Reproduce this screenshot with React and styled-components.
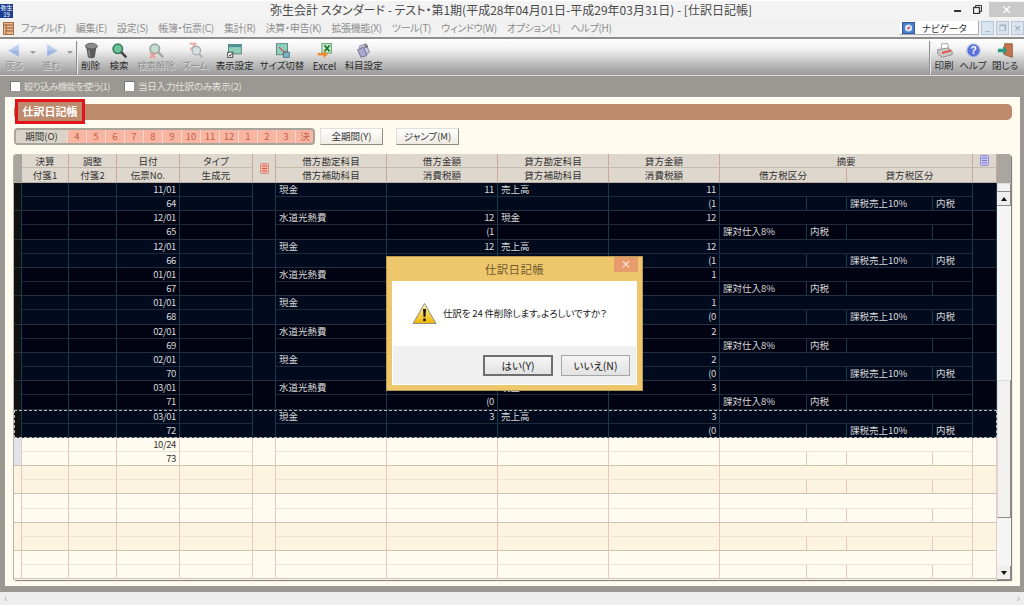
import styled, { createGlobalStyle } from "styled-components";

const GRID_COLUMNS = "8px 47px 48px 63px 73px 23px 111px 111px 111px 111px 87px 40px 86px 40px 24px";
const FONT = `"Noto Sans CJK JP", "Noto Sans", sans-serif`;

const GlobalStyle = createGlobalStyle`
  html, body {
    margin: 0;
    padding: 0;
    overflow: hidden;
    background: #fff;
  }
  * {
    box-sizing: border-box;
  }
`;

const Page = styled.div`
  position: relative;
  width: 1024px;
  height: 607px;
  display: flex;
  flex-direction: column;
  font-family: ${FONT};
  font-feature-settings: "palt";
  background: #fff;
  overflow: hidden;
`;

const TitleBar = styled.div`
  height: 19px;
  flex: none;
  display: flex;
  align-items: flex-start;
  background: #f3f3f3;
  border-top: 1px solid #fff;
`;

const AppLogo = styled.div`
  width: 13px;
  height: 14px;
  margin-top: 3px;
  background: #1c3f94;
  color: #fff;
  font-size: 6px;
  line-height: 7px;
  text-align: center;
  flex: none;
  overflow: hidden;
`;

const TitleText = styled.div`
  flex: 1;
  text-align: center;
  font-size: 12px;
  line-height: 18px;
  color: #4a4a4a;
  padding-left: 62px;
  white-space: nowrap;
`;

const WindowButtons = styled.div`
  display: flex;
  flex: none;
  width: 77px;
  align-items: flex-start;
`;

const WindowGlyph = styled.div`
  width: 20px;
  height: 14px;
  margin-top: 1px;
  display: flex;
  align-items: center;
  justify-content: center;
`;

const CloseGlyph = styled.div`
  width: 35px;
  height: 15px;
  margin-left: 2px;
  margin-top: 1px;
  background: #c9c9c9;
  color: #fff;
  font-size: 11px;
  line-height: 14px;
  text-align: center;
  font-weight: 700;
`;

const MenuBar = styled.div`
  height: 18px;
  flex: none;
  display: flex;
  align-items: center;
  background: #f1f1f1;
  padding-left: 3px;
`;

const MenuList = styled.div`
  display: flex;
  gap: 10px;
  margin-left: 7px;
`;

const MenuItem = styled.span`
  font-size: 10px;
  letter-spacing: -0.3px;
  line-height: 18px;
  color: #8d8d8d;
  white-space: nowrap;
`;

const NavigatorButton = styled.div`
  margin-left: auto;
  width: 79px;
  height: 14px;
  display: flex;
  align-items: center;
  gap: 7px;
  padding-left: 2px;
  background: #fff;
  border-right: 1px solid #aaa;
  border-bottom: 1px solid #aaa;
  font-size: 9.5px;
  color: #333;
`;

const MdiButtons = styled.div`
  display: flex;
  gap: 2px;
  margin-left: 2px;
`;

const MdiButton = styled.div`
  width: 13px;
  height: 14px;
  background: #d9e4ee;
  border: 1px solid #b7c6d3;
  color: #7c8894;
  font-size: 8px;
  line-height: 12px;
  text-align: center;
`;

const Toolbar = styled.div`
  height: 39px;
  flex: none;
  display: flex;
  align-items: stretch;
  border-top: 2px solid #8d8d8d;
  border-bottom: 1px solid #dedcd8;
  background: linear-gradient(#ffffff 0%, #f0f0f0 30%, #bcbcbc 70%, #9a9a9a 100%);
  padding-right: 2px;
`;

const ToolButton = styled.div`
  width: ${(p) => p.$w}px;
  flex: none;
  display: flex;
  flex-direction: column;
  align-items: center;
  padding-top: 3px;
  font-size: ${(p) => (p.$latin ? "10px" : "9.5px")};
  line-height: 13px;
  letter-spacing: ${(p) => (p.$latin ? "0" : "-0.1px")};
  color: ${(p) => (p.$off ? "#8f8f8f" : "#2a2a2a")};
  text-shadow: ${(p) => (p.$off ? "1px 1px 0 #dcdcdc" : "none")};
  white-space: nowrap;
  svg {
    display: block;
    width: 17px;
    height: 17px;
  }
`;

const DropArrow = styled.div`
  width: ${(p) => p.$w}px;
  flex: none;
  display: flex;
  justify-content: center;
  padding-top: 12px;
  &::after {
    content: "";
    width: 0;
    height: 0;
    border-left: 3px solid transparent;
    border-right: 3px solid transparent;
    border-top: 3px solid #9a9a9a;
  }
`;

const ToolSeparator = styled.div`
  width: 1px;
  flex: none;
  margin: 2px 0 1px;
  background: #8f8f8f;
  box-shadow: 1px 0 0 #ececec;
  margin-left: ${(p) => (p.$push ? "auto" : "0")};
`;

const OptionBar = styled.div`
  height: 20px;
  flex: none;
  display: flex;
  align-items: center;
  padding-left: 10px;
  background: #9b9893;
`;

const OptionCheck = styled.label`
  display: flex;
  align-items: center;
  gap: 4px;
  width: ${(p) => p.$w}px;
  font-size: 9.5px;
  letter-spacing: ${(p) => p.$track}px;
  color: #e4e2de;
  white-space: nowrap;
  &::before {
    content: "";
    width: 9px;
    height: 9px;
    background: #fff;
    border-left: 1px solid #777;
    border-top: 1px solid #777;
    flex: none;
  }
`;

const Main = styled.div`
  flex: 1;
  min-height: 0;
  background: #9b9893;
  padding: 1px 4px 6px 5px;
`;

const Panel = styled.div`
  height: 100%;
  background: #fffbee;
  border-top: 1px solid #fff;
  padding: 6px 8px 0 9px;
`;

const Band = styled.div`
  position: relative;
  height: 16px;
  background: #bd8a6b;
  border-radius: 5px;
`;

const BandLabel = styled.div`
  position: absolute;
  left: 1px;
  top: -5px;
  width: 70px;
  height: 25px;
  border: 3px solid #e3131c;
  background: #bd8a6b;
  color: #fff;
  font-size: 11px;
  font-weight: 700;
  line-height: 19px;
  text-align: center;
`;

const PeriodRow = styled.div`
  display: flex;
  align-items: flex-start;
  margin-top: 8px;
`;

const PeriodTabs = styled.div`
  width: 301px;
  height: 17px;
  display: flex;
  border: 2px solid #a9a49c;
  border-radius: 4px;
  overflow: hidden;
  background: #f7b5a2;
`;

const PeriodLabel = styled.div`
  width: 51px;
  flex: none;
  background: #d9d3c9;
  font-size: 9.5px;
  line-height: 13px;
  text-align: center;
  color: #333;
`;

const PeriodCell = styled.div`
  width: 19px;
  flex: none;
  border-left: 1px solid #fbd6ca;
  font-size: 9.5px;
  line-height: 13px;
  text-align: center;
  color: #c4604c;
`;

const PeriodButton = styled.button`
  width: 63px;
  height: 17px;
  margin-left: ${(p) => p.$gap}px;
  padding: 0;
  font-family: ${FONT};
  font-feature-settings: "palt";
  font-size: 9.5px;
  line-height: 13px;
  color: #333;
  background: linear-gradient(#ffffff, #eeeae2);
  border: 1px solid #e2ded6;
  border-right-color: #8e8a84;
  border-bottom-color: #8e8a84;
`;

const GridBox = styled.div`
  display: flex;
  width: 997px;
  height: 426px;
  margin-top: 9px;
  border-radius: 3px 3px 0 0;
  box-shadow: 1px 1px 1px #77746f, -1px 0 0 #b5b2ac;
  overflow: hidden;
`;

const Table = styled.div`
  width: 983px;
  flex: none;
  background: #fffbee;
`;

const HeaderGrid = styled.div`
  display: grid;
  grid-template-columns: ${GRID_COLUMNS};
  grid-template-rows: 14px 14px;
  background: #ded7cd;
  border-bottom: 1px solid #b9aea1;
`;

const HeaderCell = styled.div`
  grid-column: ${(p) => p.$col};
  grid-row: ${(p) => p.$row || "auto"};
  display: flex;
  align-items: center;
  justify-content: center;
  background: ${(p) => (p.$blank ? "#a9a6a0" : "#ded7cd")};
  border-right: ${(p) => (p.$blank ? "0" : "1px solid #c9a79a")};
  border-bottom: ${(p) => (p.$tall ? "0" : "1px solid #c5baad")};
  font-size: 9.5px;
  letter-spacing: 0.1px;
  color: #333;
  white-space: nowrap;
`;

const Record = styled.div`
  --cell-bg: ${(p) => p.$bg};
  --col-line: ${(p) => (p.$dark ? "#1b3a4c" : "#ebc6ba")};
  --row-line: ${(p) => (p.$dark ? "#1f2b3a" : "#e9e4d7")};
  --rec-line: ${(p) => (p.$dark ? "#24303e" : "#c9c2b4")};
  --cell-text: ${(p) => (p.$dark ? "#d9d9d9" : "#333")};
  position: relative;
  display: grid;
  grid-template-columns: ${GRID_COLUMNS};
  grid-template-rows: 14.17px 14.16px;
  &::after {
    content: ${(p) => (p.$selected ? '""' : "none")};
    position: absolute;
    inset: 0;
    border: 1px dashed #b5b5b5;
    pointer-events: none;
  }
`;

const Cell = styled.div`
  grid-column: ${(p) => p.$col};
  grid-row: ${(p) => p.$row};
  background: var(--cell-bg);
  border-right: 1px solid var(--col-line);
  border-bottom: 1px solid ${(p) => (p.$row === 1 ? "var(--row-line)" : "var(--rec-line)")};
  padding: 0 ${(p) => (p.$right ? "3px" : "0")} 0 ${(p) => (p.$right ? "0" : "3px")};
  font-size: 9.5px;
  letter-spacing: ${(p) => (p.$right ? "-0.4px" : "0")};
  line-height: 13px;
  color: var(--cell-text);
  text-align: ${(p) => (p.$right ? "right" : "left")};
  white-space: nowrap;
  overflow: hidden;
`;

const SpanCell = styled.div`
  grid-column: ${(p) => p.$col};
  grid-row: 1 / 3;
  background: ${(p) => p.$bg || "var(--cell-bg)"};
  border-right: 1px solid var(--col-line);
  border-bottom: 1px solid var(--rec-line);
`;

const Scrollbar = styled.div`
  width: 14px;
  flex: none;
  display: flex;
  flex-direction: column;
  background: #f5f5f5;
`;

const ScrollHead = styled.div`
  height: 29px;
  flex: none;
  background: #a9a6a0;
`;

const ScrollThumb = styled.div`
  height: ${(p) => p.$h}px;
  flex: none;
  background: #f2f1ef;
  border: 1px solid #dcdcdc;
  border-right-color: #8d8d8d;
  border-bottom-color: #8d8d8d;
`;

const ScrollArrow = styled.div`
  height: 14px;
  flex: none;
  display: flex;
  align-items: center;
  justify-content: center;
  background: #f0efed;
  border-right: 1px solid #8d8d8d;
  border-bottom: 1px solid #8d8d8d;
  &::after {
    content: "";
    width: 0;
    height: 0;
    border-left: 3px solid transparent;
    border-right: 3px solid transparent;
    border-${(p) => (p.$up ? "bottom" : "top")}: 4px solid #111;
  }
`;

const ScrollTrack = styled.div`
  flex: ${(p) => (p.$h ? "none" : 1)};
  height: ${(p) => (p.$h ? `${p.$h}px` : "auto")};
`;

const StatusBar = styled.div`
  height: 13px;
  flex: none;
  display: flex;
  align-items: center;
  justify-content: space-between;
  padding: 0 4px;
  background: #eeeeee;
  color: #c4c4c4;
  font-size: 10px;
  font-weight: 700;
  font-family: "Liberation Sans", sans-serif;
`;

const BottomEdge = styled.div`
  height: 2px;
  flex: none;
  background: #fff;
`;

const Dialog = styled.div`
  position: absolute;
  left: 386px;
  top: 256px;
  width: 257px;
  height: 135px;
  display: flex;
  flex-direction: column;
  background: #eec66b;
  border: 1px solid #b89a55;
  padding: 0 5px 5px;
`;

const DialogTitle = styled.div`
  height: 24px;
  flex: none;
  text-align: center;
  font-size: 11.5px;
  line-height: 24px;
  color: #6e5b33;
  letter-spacing: 0.3px;
`;

const DialogClose = styled.div`
  position: absolute;
  right: 4px;
  top: 0;
  width: 24px;
  height: 15px;
  background: #e69c6c;
  color: #fff;
  font-size: 10px;
  line-height: 14px;
  text-align: center;
`;

const DialogBody = styled.div`
  flex: 1;
  display: flex;
  flex-direction: column;
  border: 1px solid #fff;
  background: #fff;
`;

const DialogMessage = styled.div`
  flex: 1;
  display: flex;
  align-items: center;
  gap: 6px;
  padding: 0 0 2px 19px;
  font-size: 9.5px;
  letter-spacing: -0.15px;
  color: #222;
  white-space: nowrap;
`;

const DialogFooter = styled.div`
  height: 38px;
  flex: none;
  display: flex;
  justify-content: flex-end;
  align-items: flex-start;
  gap: 8px;
  padding: 9px 6px 0 0;
  background: #f0f0f0;
`;

const DialogButton = styled.button`
  width: ${(p) => p.$w}px;
  height: 21px;
  padding: 0;
  font-family: ${FONT};
  font-feature-settings: "palt";
  font-size: 10.5px;
  line-height: 15px;
  color: #222;
  background: linear-gradient(#f5f5f5, #e2e2e2);
  border: ${(p) => (p.$primary ? "2px solid #6f6f6f" : "1px solid #a5a5a5")};
`;

const MENU = [
  "ファイル(F)", "編集(E)", "設定(S)", "帳簿・伝票(C)", "集計(R)", "決算・申告(K)",
  "拡張機能(X)", "ツール(T)", "ウィンドウ(W)", "オプション(L)", "ヘルプ(H)",
];

const MONTHS = ["4", "5", "6", "7", "8", "9", "10", "11", "12", "1", "2", "3", "決"];

const HEAD_TOP = [
  ["2", "決算"], ["3", "調整"], ["4", "日付"], ["5", "タイプ"],
  ["7", "借方勘定科目"], ["8", "借方金額"], ["9", "貸方勘定科目"], ["10", "貸方金額"], ["11 / 15", "摘要"],
];

const HEAD_BOTTOM = [
  ["2", "付箋1"], ["3", "付箋2"], ["4", "伝票No."], ["5", "生成元"],
  ["7", "借方補助科目"], ["8", "消費税額"], ["9", "貸方補助科目"], ["10", "消費税額"],
  ["11 / 13", "借方税区分"], ["13 / 15", "貸方税区分"],
];

const sale = (date, no, amount, tax) => ({
  date, no, debit: "現金", debitAmt: amount, credit: "売上高", creditAmt: amount, creditTax: tax, kind: "sale",
});
const buy = (date, no, amount, tax) => ({
  date, no, debit: "水道光熱費", debitAmt: amount, credit: "現金", creditAmt: amount, debitTax: tax, kind: "buy",
});
// the dialog sits on these columns
const underDialog = (rec) => ({ ...rec, debitAmt: "", credit: "", debitTax: "" });

const RECORDS = [
  sale("11/01", "64", "11", "(1"),
  buy("12/01", "65", "12", "(1"),
  sale("12/01", "66", "12", "(1"),
  underDialog(buy("01/01", "67", "1", "(0")),
  underDialog(sale("01/01", "68", "1", "(0")),
  underDialog(buy("02/01", "69", "2", "(0")),
  underDialog(sale("02/01", "70", "2", "(0")),
  buy("03/01", "71", "3", "(0"),
  sale("03/01", "72", "3", "(0"),
  { date: "10/24", no: "73", active: true },
  {},
  {},
  {},
  {},
];

const recordBg = (i, dark) => {
  if (dark) return i % 2 === 0 ? "#020a1e" : "#010312";
  return (i - 9) % 2 === 0 ? "#fffbee" : "#fdf3e1";
};

const Glyph = ({ children }) => <svg viewBox="0 0 20 20">{children}</svg>;

const ArrowIcon = ({ flip }) => (
  <Glyph>
    <path d={flip ? "M5 3 L17 10 L5 17 Z" : "M15 3 L3 10 L15 17 Z"} fill="#b9cbea" stroke="#ccd8ec" />
    <path d={flip ? "M5 10 L17 10 L5 17 Z" : "M15 10 L3 10 L15 17 Z"} fill="#9db5e0" />
  </Glyph>
);

const TrashIcon = () => (
  <Glyph>
    <ellipse cx="11" cy="5" rx="7" ry="3.5" fill="#8d8d8d" stroke="#555" />
    <path d="M5 6 L7 18 Q11 20 15 18 L17 6 Q11 10 5 6 Z" fill="#5d5d5d" />
    <path d="M8 9 L9 17" stroke="#aaa" />
  </Glyph>
);

const SearchIcon = ({ off }) => (
  <Glyph>
    <circle cx="8" cy="8" r="5.5" fill={off ? "#c9dcd2" : "#6cc49a"} stroke={off ? "#9aa8a0" : "#3d7d60"} strokeWidth="2" />
    <path d="M12 12 L18 18" stroke={off ? "#a8a8a8" : "#444"} strokeWidth="3" />
    {off && <path d="M2 13 L9 19 M9 13 L2 19" stroke="#e89a94" strokeWidth="2" />}
  </Glyph>
);

const ZoomIcon = () => (
  <Glyph>
    <path d="M3 2 H10 L5 8 H10" fill="none" stroke="#e8a8a0" strokeWidth="2" />
    <circle cx="11" cy="10" r="5" fill="#d5e2e0" stroke="#a8b0b0" strokeWidth="1.5" />
    <path d="M14 14 L18 18" stroke="#b0b0b0" strokeWidth="2.5" />
  </Glyph>
);

const DisplayIcon = () => (
  <Glyph>
    <rect x="3" y="3" width="15" height="11" fill="#8fcfb8" stroke="#4b7d70" />
    <rect x="3" y="3" width="15" height="3" fill="#4f8f9c" />
    <rect x="2" y="12" width="6" height="6" fill="#fff" stroke="#333" />
    <path d="M3.5 15 L5 16.5 L7 13.5" fill="none" stroke="#222" />
  </Glyph>
);

const SizeIcon = () => (
  <Glyph>
    <rect x="3" y="2" width="13" height="13" fill="#8fd0bc" stroke="#4b7d70" />
    <path d="M6 6 L14 14 M14 14 V10 M14 14 H10" stroke="#d0485a" strokeWidth="1.5" fill="none" />
    <rect x="11" y="12" width="7" height="6" fill="#7ab4c8" stroke="#44707f" />
  </Glyph>
);

const ExcelIcon = () => (
  <Glyph>
    <rect x="7" y="2" width="11" height="11" fill="#d7efd9" stroke="#3f8f4c" />
    <path d="M10 4 L16 11 M16 4 L10 11" stroke="#1b7a2d" strokeWidth="2" />
    <path d="M2 13 L9 13 L9 10 L14 14.5 L9 19 L9 16 L2 16 Z" fill="#ee8a2c" />
  </Glyph>
);

const AccountIcon = () => (
  <Glyph>
    <path d="M5 5 L13 2 L17 12 L9 16 Z" fill="#c9c8e6" stroke="#77779c" />
    <path d="M3 9 L10 6 L14 16 L7 18 Z" fill="#a9a8cf" stroke="#66668c" />
    <circle cx="13" cy="5" r="2" fill="#777" />
  </Glyph>
);

const PrintIcon = () => (
  <Glyph>
    <path d="M7 2 L14 2 L15 9 L6 9 Z" fill="#fff" stroke="#999" />
    <path d="M2 9 L14 7 L19 11 L19 15 L7 18 L2 14 Z" fill="#c9c9c9" stroke="#888" />
    <path d="M7 13 L18 10" stroke="#e25a4c" strokeWidth="2.5" />
  </Glyph>
);

const HelpIcon = () => (
  <Glyph>
    <circle cx="10" cy="10" r="8" fill="#5b73d8" stroke="#c7cfe8" strokeWidth="1.5" />
    <text x="10" y="14.5" textAnchor="middle" fontSize="12" fontWeight="700" fill="#fff" fontFamily="Liberation Sans">?</text>
  </Glyph>
);

const CloseIcon = () => (
  <Glyph>
    <path d="M9 2 L18 2 L18 18 L9 15 Z" fill="#c4744c" stroke="#8d5638" />
    <path d="M1 8 H7 V5 L12 10 L7 15 V12 H1 Z" fill="#2f9a86" />
  </Glyph>
);

const WarningIcon = () => (
  <svg width="25" height="23" viewBox="0 0 25 23">
    <defs>
      <linearGradient id="warnFill" x1="0" y1="0" x2="0" y2="1">
        <stop offset="0" stopColor="#fff6b0" />
        <stop offset="1" stopColor="#f0b400" />
      </linearGradient>
    </defs>
    <path d="M12.5 1.5 L24 21.5 H1 Z" fill="url(#warnFill)" stroke="#8f8f8f" strokeLinejoin="round" />
    <path d="M11 7 H14 L13.4 15 H11.6 Z" fill="#111" />
    <rect x="11.3" y="16.5" width="2.4" height="2.6" fill="#111" />
  </svg>
);

const NoteIcon = ({ blue }) => (
  <svg width="9" height="11" viewBox="0 0 9 11">
    <rect x="0.5" y="0.5" width="8" height="10" rx="1" fill={blue ? "#c9c6f5" : "#f2b7a8"} stroke={blue ? "#8f8ccf" : "#d38f80"} />
    <path d="M2 3 H7 M2 5.5 H7 M2 8 H7" stroke={blue ? "#7775c0" : "#d9544a"} />
  </svg>
);

const MenuIcon = () => (
  <svg width="11" height="13" viewBox="0 0 11 13" style={{ flex: "none" }}>
    <rect x="0.5" y="0.5" width="10" height="12" fill="#e9b98c" stroke="#a86f45" />
    <path d="M0.5 3 H10 M3 3 V12 M3 6 H10 M3 9 H10" stroke="#8f5a38" />
  </svg>
);

const NaviIcon = () => (
  <svg width="13" height="12" viewBox="0 0 13 12" style={{ flex: "none" }}>
    <rect x="0.5" y="0.5" width="12" height="11" fill="#4d7fcf" stroke="#2f5a9e" />
    <circle cx="6.5" cy="6" r="3.6" fill="#d9e7f7" />
    <path d="M5 7.5 L6 5 L8.5 4.5 L7 7 Z" fill="#d94a3c" />
  </svg>
);

const RestoreIcon = () => (
  <svg width="9" height="9" viewBox="0 0 9 9">
    <path d="M2.5 2.5 V0.5 H8.5 V6.5 H6.5" fill="none" stroke="#333" />
    <rect x="0.5" y="2.5" width="6" height="6" fill="none" stroke="#333" strokeWidth="1.3" />
  </svg>
);

const MinimizeIcon = () => (
  <svg width="9" height="9" viewBox="0 0 9 9">
    <path d="M1 6 H8" stroke="#333" strokeWidth="2" />
  </svg>
);

const RecordRow = ({ rec, index }) => {
  const dark = index < 9;
  return (
    <Record $dark={dark} $bg={recordBg(index, dark)} $selected={index === 8}>
      <SpanCell $col="1" $bg={dark ? "#101010" : rec.active ? "#e3e3ea" : undefined} />
      <Cell $col="2" $row={1} />
      <Cell $col="3" $row={1} />
      <Cell $col="4" $row={1} $right>{rec.date}</Cell>
      <Cell $col="5" $row={1} />
      <SpanCell $col="6" />
      <Cell $col="7" $row={1}>{rec.debit}</Cell>
      <Cell $col="8" $row={1} $right>{rec.debitAmt}</Cell>
      <Cell $col="9" $row={1}>{rec.credit}</Cell>
      <Cell $col="10" $row={1} $right>{rec.creditAmt}</Cell>
      <Cell $col="11 / 15" $row={1} />
      <SpanCell $col="15" />
      <Cell $col="2" $row={2} />
      <Cell $col="3" $row={2} />
      <Cell $col="4" $row={2} $right>{rec.no}</Cell>
      <Cell $col="5" $row={2} />
      <Cell $col="7" $row={2} />
      <Cell $col="8" $row={2} $right>{rec.debitTax}</Cell>
      <Cell $col="9" $row={2} />
      <Cell $col="10" $row={2} $right>{rec.creditTax}</Cell>
      <Cell $col="11" $row={2}>{rec.kind === "buy" && "課対仕入8%"}</Cell>
      <Cell $col="12" $row={2}>{rec.kind === "buy" && "内税"}</Cell>
      <Cell $col="13" $row={2}>{rec.kind === "sale" && "課税売上10%"}</Cell>
      <Cell $col="14" $row={2}>{rec.kind === "sale" && "内税"}</Cell>
    </Record>
  );
};

export default function App() {
  return (
    <Page>
      <GlobalStyle />
      <TitleBar>
        <AppLogo>弥生<br />19</AppLogo>
        <TitleText>弥生会計 スタンダード - テスト・第1期(平成28年04月01日-平成29年03月31日) - [仕訳日記帳]</TitleText>
        <WindowButtons>
          <WindowGlyph><MinimizeIcon /></WindowGlyph>
          <WindowGlyph><RestoreIcon /></WindowGlyph>
          <CloseGlyph>×</CloseGlyph>
        </WindowButtons>
      </TitleBar>

      <MenuBar>
        <MenuIcon />
        <MenuList>
          {MENU.map((m) => <MenuItem key={m}>{m}</MenuItem>)}
        </MenuList>
        <NavigatorButton><NaviIcon />ナビゲータ</NavigatorButton>
        <MdiButtons>
          <MdiButton>_</MdiButton>
          <MdiButton>❐</MdiButton>
          <MdiButton>×</MdiButton>
        </MdiButtons>
      </MenuBar>

      <Toolbar>
        <ToolButton $w={28} $off><ArrowIcon />戻る</ToolButton>
        <DropArrow $w={10} />
        <ToolButton $w={26} $off><ArrowIcon flip />進む</ToolButton>
        <DropArrow $w={12} />
        <ToolSeparator />
        <ToolButton $w={27}><TrashIcon />削除</ToolButton>
        <ToolButton $w={30}><SearchIcon />検索</ToolButton>
        <ToolButton $w={44} $off><SearchIcon off />検索解除</ToolButton>
        <ToolButton $w={34} $off><ZoomIcon />ズーム</ToolButton>
        <ToolButton $w={45}><DisplayIcon />表示設定</ToolButton>
        <ToolButton $w={50}><SizeIcon />サイズ切替</ToolButton>
        <ToolButton $w={35} $latin><ExcelIcon />Excel</ToolButton>
        <ToolButton $w={43}><AccountIcon />科目設定</ToolButton>
        <ToolSeparator $push />
        <ToolButton $w={28}><PrintIcon />印刷</ToolButton>
        <ToolButton $w={30}><HelpIcon />ヘルプ</ToolButton>
        <ToolButton $w={34}><CloseIcon />閉じる</ToolButton>
      </Toolbar>

      <OptionBar>
        <OptionCheck $w={114} $track={-0.6}>絞り込み機能を使う(1)</OptionCheck>
        <OptionCheck $w={130} $track={-0.2}>当日入力仕訳のみ表示(2)</OptionCheck>
      </OptionBar>

      <Main>
        <Panel>
          <Band>
            <BandLabel>仕訳日記帳</BandLabel>
          </Band>
          <PeriodRow>
            <PeriodTabs>
              <PeriodLabel>期間(O)</PeriodLabel>
              {MONTHS.map((m) => <PeriodCell key={m}>{m}</PeriodCell>)}
            </PeriodTabs>
            <PeriodButton $gap={5}>全期間(Y)</PeriodButton>
            <PeriodButton $gap={13}>ジャンプ(M)</PeriodButton>
          </PeriodRow>
          <GridBox>
            <Table>
              <HeaderGrid>
                <HeaderCell $col="1" $row="1 / 3" $blank $tall />
                {HEAD_TOP.map(([col, label]) => (
                  <HeaderCell key={label} $col={col} $row="1">{label}</HeaderCell>
                ))}
                <HeaderCell $col="6" $row="1 / 3" $tall><NoteIcon /></HeaderCell>
                <HeaderCell $col="15" $row="1"><NoteIcon blue /></HeaderCell>
                {HEAD_BOTTOM.map(([col, label], i) => (
                  <HeaderCell key={i} $col={col} $row="2" $tall>{label}</HeaderCell>
                ))}
                <HeaderCell $col="15" $row="2" $tall />
              </HeaderGrid>
              {RECORDS.map((rec, i) => <RecordRow key={i} rec={rec} index={i} />)}
            </Table>
            <Scrollbar>
              <ScrollHead />
              <ScrollThumb $h={9} />
              <ScrollArrow $up />
              <ScrollTrack $h={174} />
              <ScrollThumb $h={138} />
              <ScrollTrack />
              <ScrollArrow />
            </Scrollbar>
          </GridBox>
        </Panel>
      </Main>

      <StatusBar><span>‹</span><span>›</span></StatusBar>
      <BottomEdge />

      <Dialog>
        <DialogTitle>仕訳日記帳</DialogTitle>
        <DialogClose>×</DialogClose>
        <DialogBody>
          <DialogMessage>
            <WarningIcon />
            仕訳を 24 件削除します。よろしいですか？
          </DialogMessage>
          <DialogFooter>
            <DialogButton $w={70} $primary>はい(Y)</DialogButton>
            <DialogButton $w={69}>いいえ(N)</DialogButton>
          </DialogFooter>
        </DialogBody>
      </Dialog>
    </Page>
  );
}
